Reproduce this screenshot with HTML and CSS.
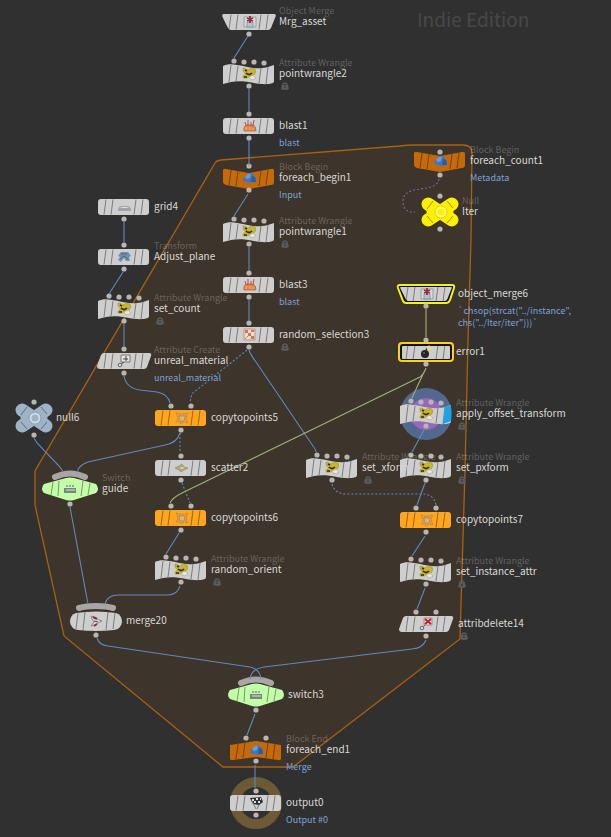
FILE: index.html
```html
<!DOCTYPE html>
<html lang="en">
<head>
<meta charset="utf-8">
<title>Network editor</title>
<link rel="stylesheet" href="styles.css">
</head>
<body>
<svg class="defs" aria-hidden="true">
  <defs>
    <!-- node bodies, centred on 0,0 -->
    <g id="s-rect"><rect x="-26" y="-8" width="51" height="16" rx="3" fill="currentColor"/><use href="#ticks"/></g>
    <g id="ticks" class="ticks"><path d="M-18-7.5-20 7.5M-11-7.5-13 7.5M12-7.5 10 7.5M19-7.5 17 7.5"/></g>
    <g id="s-wave"><path fill="currentColor" d="M-26-8C-22-10-17-10-12-9C-4-8 4-5 12-6C17-6 21-8 25-9V7Q25 8 24 9C18 11 11 10 5 9C-4 7-12 7-18 8Q-22 9-26 10Z"/><path class="ticks" d="M-18-9-20 8M-11-8-13 7M12-6 10 9M19-7 17 10"/></g>
    <g id="s-down"><path fill="currentColor" d="M-26-8Q-25-10-23-9L0-5 22-9Q25-10 25-7V4Q25 7 22 7L0 11-23 7Q-26 6-26 4Z"/><path class="ticks" d="M-18-8-20 7M-11-7-13 8M12-7 10 8M19-8 17 7"/></g>
    <g id="s-up"><path fill="currentColor" d="M-26-5 0-9 25-5V8Q25 11 22 10L0 7-23 10Q-26 11-26 8Z"/><path class="ticks" d="M-18-6-20 9M-11-7-13 8M12-7 10 8M19-6 17 9"/></g>
    <g id="s-trap"><path fill="currentColor" d="M-25-8H25Q28-8 26-4L22 6Q21 8 19 8H-18Q-20 8-21 6L-26-4Q-28-8-25-8Z"/><use href="#ticks"/></g>
    <g id="s-para"><path fill="currentColor" d="M-20-8H25Q28-8 27-5L23 6Q22 8 20 8H-24Q-27 8-27 5L-23-6Q-22-8-20-8Z"/><use href="#ticks"/></g>
    <g id="s-hex"><path fill="currentColor" d="M-26-5-4-11Q0-12 4-11L26-5Q30 0 26 4L4 11Q0 12-4 11L-26 4Q-30 0-26-5Z"/><path class="ticks" d="M-17-7-19 6M-11-8-12 7M13-8 11 7M20-6 18 6"/><path class="arc" d="M-15-12Q0-19 15-12"/></g>
    <g id="s-merge"><path fill="currentColor" d="M-20-8Q0-11 20-8Q26-6 26 1Q25 8 18 9Q0 11-18 9Q-25 8-26 1Q-26-6-20-8Z"/><path class="ticks" d="M-18-8-20 8M-11-9-13 9M12-9 10 9M19-8 17 8"/><path class="arc" d="M-17-13Q-10-15 0-15T17-13"/></g>
    <g id="s-null"><path d="M-12-8 12 8M-12 8 12-8" fill="none" stroke="currentColor" stroke-width="13" stroke-linecap="round"/><path d="M-14 0-8-5H8L14 0 8 5H-8Z" fill="currentColor"/><path class="ticks" d="M-13-3-7-11M7-11 13-4M-13 4-7 11M7 11 13 4"/><circle r="4.5" cx="1" fill="none" stroke="#fff" stroke-opacity=".5" stroke-width="2"/><circle r="6" cx="1" fill="none" stroke="#000" stroke-opacity=".22" stroke-dasharray="1 1"/></g>
    <!-- connectors -->
    <circle id="p-in" class="port" cy="-12" r="2.6"/>
    <circle id="p-out" class="port" cy="12" r="2.6"/>
    <g id="p-in2" class="port"><circle cx="-10" cy="-12" r="2.6"/><circle cx="10" cy="-12" r="2.6"/></g>
    <g id="p-in4" class="port"><circle cx="-15" cy="-13" r="2.6"/><circle cx="-5" cy="-12" r="2.6"/><circle cx="5" cy="-12" r="2.6"/><circle cx="15" cy="-11" r="2.6"/></g>
    <!-- icons -->
    <g id="i-merge-obj"><path d="M-5-5H7V5H-5Z" fill="#d3dcdf" stroke="#8fa0a6"/><path d="M-2 5V0H4V5Z" fill="#b3c5cb" stroke="#7b929a" stroke-width=".8"/><path d="M1-6V1M-2-4 4-1M4-4-2-1" stroke="#a52634" stroke-width="1.8"/></g>
    <g id="i-wrangle"><path d="M-6-6Q-3-6-1-4Q2-7 6-5Q8-2 5 1L1 2Q-1 5-6 4L-6 2Q-4 0-3 0Q-7-2-6-6Z" fill="#c9b62a" stroke="#a1952f" stroke-width=".6"/><path d="M-3-1Q0 2 3-1M-5 3-2 3M-4-4-2-3" stroke="#2f2d19" stroke-width="1.7" fill="none"/><path d="M0 3 4 1 7 4 4 6 1 5Z" fill="#e6e5dc" stroke="#99978a" stroke-width=".5"/></g>
    <g id="i-blast"><path d="M-5 5Q-6 0-2-1H4Q7 0 7 5Z" fill="#df8747" stroke="#a9603a" stroke-width=".7"/><path d="M-4-4-3 0M-1-6V0M2-4V0M5-6 4 0" stroke="#b5504c" fill="none"/><path d="M-3 4V1M1 4V1M4 4V2" stroke="#f3b67e" fill="none"/></g>
    <g id="i-block"><path d="M-6 3Q-6-1-3-2-1-6 2-5Q5-4 6-1 8 1 7 4Q1 6-6 3Z" fill="#3f76bd"/><path d="M-4-1Q-1-6 2-4L1 0-2 1Z" fill="#6a9cd8"/><path d="M2 4 3-2 6-1 7 4Z" fill="#2b5c9f"/></g>
    <g id="i-random"><path d="M-5-6H6V5H-5Z" fill="#ead9ce" stroke="#bd8468" stroke-width=".8"/><path d="M-4-5H-1V-2H-4ZM-1-2H2V1H-1ZM2 1H5V4H2ZM2-5H5V-3H2Z" fill="#c67a54"/><path d="M-4 4-1 1" stroke="#b79080" fill="none"/></g>
    <g id="i-grid"><path d="M-6 4V2Q-5-1-3-1H4Q6-1 7 2V4Z" fill="#a2a2a9"/><path d="M-4 1-2 0H3L5 1Z" fill="#dddde1"/></g>
    <g id="i-xform"><path d="M-6-1-3-5H4L7-1 5 0 6 4H2L0 1-3 5-6 3-4 0Z" fill="#7390b0"/><path d="M-3-3H3M-4 2 0-1 4 2" stroke="#48678a" fill="none"/></g>
    <g id="i-attr"><path d="M-3-6H6V1H-3Z" fill="#e6e6e6" stroke="#777"/><path d="M-1-2H4M2-5V0M-4 4 0 1" stroke="#444" fill="none"/><circle cx="-4" cy="4" r="1.8" fill="#ddd" stroke="#666"/></g>
    <g id="i-delete"><path d="M-2-6H6V1H-2Z" fill="#ddd" stroke="#996c70" stroke-width=".7"/><path d="M-1-5 5 0M5-5-1 0" stroke="#c3202d" stroke-width="2"/><path d="M-4 4-1 1" stroke="#555"/><circle cx="-4" cy="4" r="1.8" fill="#ddd" stroke="#666"/></g>
    <g id="i-copy"><path d="M-5-5-1-4 3-4 7-5 5 0 7 5 3 4 0 6-2 4-5 4-3 0Z" fill="#d99f4f" stroke="#b9823f" stroke-width=".8" stroke-dasharray="2 1"/><path d="M-2-2H4L3 3H-1Z" fill="#e0b673" stroke="#b9823f" stroke-width=".7"/></g>
    <g id="i-scatter"><path d="M-6 0-2-2 1-4 3-1 7 0 3 2 0 4-2 2Z" fill="#b0a873" stroke="#8b8768" stroke-width=".6"/><path d="M-2 0 1-1 4 0 1 1Z" fill="#dfdaa9"/></g>
    <g id="i-switch"><path d="M-6-1H6V4H-6Z" fill="#77867b"/><path d="M-4 0H5V2H-4Z" fill="#a9b7ae"/><path d="M-4-3H-2M-1-3H1M2-3H4" stroke="#7d927c" stroke-width="1.5"/></g>
    <g id="i-join"><path d="M-5-5 0-3 3-1 6 0 2 2-1 4-5 5-2 1-4-2Z" fill="#dbd4d6" stroke="#81757b" stroke-width=".8"/><path d="M-3-4 1-2M-2 5 1 3" stroke="#763445" stroke-width="2"/><path d="M-2 0 2 1" stroke="#50474c"/></g>
    <g id="i-bomb"><circle cx="-1" cy="2" r="4" fill="#252525"/><path d="M0-2 2-4" stroke="#333" stroke-width="2"/><circle cx="3" cy="-4" r="2.4" fill="#ead887"/><circle cx="-2" cy="1" r="1" fill="#666"/></g>
    <g id="i-flag"><path d="M-6-5 5-6 7-1 3 2-3 1Z" fill="#2f2f2f"/><path d="M-4-4H-2V-2H-4ZM0-5H2V-3H0ZM4-5H5V-3H4ZM-2-2H0V0H-2ZM2-2H4V0H2Z" fill="#ddd"/><path d="M-4-2 0 6M3 2 1 6" stroke="#777" fill="none"/></g>
    <g id="i-lock"><path d="M2 4V2Q4 0 6 2V4" fill="none" stroke="#5a5a5a" stroke-width="1.4"/><path d="M1 3H7L8 7Q4 9 0 7Z" fill="#595b5b"/><path d="M4 4V6" stroke="#333"/></g>
  </defs>
</svg>

<main class="canvas">
  <svg class="layer" aria-hidden="true"><path class="box" d="M221 160 400 146Q407 145 414 145H463Q472 145 472 153L471 240 468 340 465 470 460 639 293 767H223L64 636 35 505V471L215 163Q216 161 221 160Z"/></svg>
  <h1 class="edition">Indie Edition</h1>

  <article class="node" id="mrg-asset"><svg class="body"><use href="#s-trap"/><use href="#i-merge-obj"/><use href="#p-out"/></svg><div class="label"><span class="type">Object Merge</span><span class="name">Mrg_asset</span></div></article>
  <article class="node" id="pointwrangle2"><svg class="body"><use href="#s-wave"/><use href="#i-wrangle"/><use href="#p-in4"/><use href="#p-out"/></svg><div class="label"><span class="type">Attribute Wrangle</span><span class="name">pointwrangle2</span><svg class="lock"><use href="#i-lock"/></svg></div></article>
  <article class="node" id="blast1"><svg class="body"><use href="#s-rect"/><use href="#i-blast"/><use href="#p-in"/><use href="#p-out"/></svg><div class="label"><span class="name">blast1</span><span class="note">blast</span></div></article>
  <article class="node block" id="foreach-begin1"><svg class="body"><use href="#s-down"/><use href="#i-block"/><use href="#p-in"/><use href="#p-out"/></svg><div class="label"><span class="type">Block Begin</span><span class="name">foreach_begin1</span><span class="note">Input</span></div></article>
  <article class="node" id="pointwrangle1"><svg class="body"><use href="#s-wave"/><use href="#i-wrangle"/><use href="#p-in4"/><use href="#p-out"/></svg><div class="label"><span class="type">Attribute Wrangle</span><span class="name">pointwrangle1</span><svg class="lock"><use href="#i-lock"/></svg></div></article>
  <article class="node" id="blast3"><svg class="body"><use href="#s-rect"/><use href="#i-blast"/><use href="#p-in"/><use href="#p-out"/></svg><div class="label"><span class="name">blast3</span><span class="note">blast</span></div></article>
  <article class="node" id="random-selection3"><svg class="body"><use href="#s-rect"/><use href="#i-random"/><use href="#p-in"/><use href="#p-out"/></svg><div class="label"><span class="name">random_selection3</span><svg class="lock"><use href="#i-lock"/></svg></div></article>

  <article class="node" id="grid4"><svg class="body"><use href="#s-rect"/><use href="#i-grid"/><use href="#p-out"/></svg><div class="label"><span class="name">grid4</span></div></article>
  <article class="node" id="adjust-plane"><svg class="body"><use href="#s-rect"/><use href="#i-xform"/><use href="#p-in"/><use href="#p-out"/></svg><div class="label"><span class="type">Transform</span><span class="name">Adjust_plane</span></div></article>
  <article class="node" id="set-count"><svg class="body"><use href="#s-wave"/><use href="#i-wrangle"/><use href="#p-in4"/><use href="#p-out"/></svg><div class="label"><span class="type">Attribute Wrangle</span><span class="name">set_count</span><svg class="lock"><use href="#i-lock"/></svg></div></article>
  <article class="node" id="unreal-material"><svg class="body"><use href="#s-para"/><use href="#i-attr"/><use href="#p-in"/><use href="#p-out"/></svg><div class="label"><span class="type">Attribute Create</span><span class="name">unreal_material</span><span class="note">unreal_material</span></div></article>

  <article class="node null-blue" id="null6"><svg class="body"><use href="#s-null"/><circle class="port" cy="-16" r="2.6"/><circle class="port" cy="17" r="2.6"/></svg><div class="label near"><span class="name">null6</span></div></article>
  <article class="node switch" id="guide"><svg class="body"><use href="#s-hex"/><use href="#i-switch"/><circle class="port" cy="15" r="2.6"/></svg><div class="label wide"><span class="type">Switch</span><span class="name">guide</span></div></article>

  <article class="node copy" id="copytopoints5"><svg class="body"><use href="#s-rect"/><use href="#i-copy"/><use href="#p-in2"/><use href="#p-out"/></svg><div class="label"><span class="name">copytopoints5</span></div></article>
  <article class="node" id="scatter2"><svg class="body"><use href="#s-rect"/><use href="#i-scatter"/><use href="#p-in"/><use href="#p-out"/></svg><div class="label"><span class="name">scatter2</span></div></article>
  <article class="node copy" id="copytopoints6"><svg class="body"><use href="#s-rect"/><use href="#i-copy"/><use href="#p-in2"/><use href="#p-out"/></svg><div class="label"><span class="name">copytopoints6</span></div></article>
  <article class="node" id="random-orient"><svg class="body"><use href="#s-wave"/><use href="#i-wrangle"/><use href="#p-in4"/><use href="#p-out"/></svg><div class="label"><span class="type">Attribute Wrangle</span><span class="name">random_orient</span><svg class="lock"><use href="#i-lock"/></svg></div></article>
  <article class="node" id="merge20"><svg class="body"><use href="#s-merge"/><use href="#i-join"/><circle class="port" cy="14" r="2.6"/></svg><div class="label"><span class="name">merge20</span></div></article>

  <article class="node block" id="foreach-count1"><svg class="body"><use href="#s-down"/><use href="#i-block"/><circle class="port" cy="-9" r="2.6"/><circle class="port" cy="14" r="2.6"/></svg><div class="label"><span class="type">Block Begin</span><span class="name">foreach_count1</span><span class="note">Metadata</span></div></article>
  <article class="node null-yellow" id="iter"><svg class="body"><use href="#s-null"/><circle class="port" cy="-16" r="2.6"/><circle class="port" cy="17" r="2.6"/></svg><div class="label near"><span class="type">Null</span><span class="name">Iter</span></div></article>

  <article class="node" id="object-merge6"><svg class="body"><use href="#s-trap"/><path class="gap" d="M-25-8H25Q28-8 26-4L22 6Q21 8 19 8H-18Q-20 8-21 6L-26-4Q-28-8-25-8Z"/><path class="selected" d="M-26-9H26Q29-9 28-6L24 6Q23 9 20 9H-20Q-22 9-23 7L-28-6Q-29-9-26-9Z"/><use href="#i-merge-obj"/><use href="#p-out"/></svg><div class="label wide"><span class="name">object_merge6</span><span class="note">`chsop(strcat("../instance",<br>chs("../Iter/iter")))`</span></div></article>
  <article class="node" id="error1"><svg class="body"><use href="#s-rect"/><rect class="gap" x="-25" y="-7" width="50" height="15" rx="2"/><rect class="selected current" x="-27" y="-9" width="54" height="18" rx="3"/><use href="#i-bomb"/><use href="#p-in"/><use href="#p-out"/></svg><div class="label"><span class="name">error1</span></div></article>

  <article class="node" id="set-xform"><svg class="body"><use href="#s-wave"/><use href="#i-wrangle"/><use href="#p-in4"/><use href="#p-out"/></svg><div class="label"><span class="type">Attribute Wrangle</span><span class="name">set_xform</span><svg class="lock"><use href="#i-lock"/></svg></div></article>
  <article class="node" id="apply-offset"><svg class="body"><circle r="26" fill="#53688f"/><circle r="16" fill="#9568b8"/><use href="#s-wave"/><path fill="#12a7ec" d="M19-7 25-9V7L17 10Z"/><use href="#i-wrangle"/><use href="#p-in4"/><use href="#p-out"/></svg><div class="label"><span class="type">Attribute Wrangle</span><span class="name">apply_offset_transform</span><svg class="lock"><use href="#i-lock"/></svg></div></article>
  <article class="node" id="set-pxform"><svg class="body"><use href="#s-wave"/><use href="#i-wrangle"/><use href="#p-in4"/><use href="#p-out"/></svg><div class="label"><span class="type">Attribute Wrangle</span><span class="name">set_pxform</span><svg class="lock"><use href="#i-lock"/></svg></div></article>
  <article class="node copy" id="copytopoints7"><svg class="body"><use href="#s-rect"/><use href="#i-copy"/><use href="#p-in2"/><use href="#p-out"/></svg><div class="label"><span class="name">copytopoints7</span></div></article>
  <article class="node" id="set-instance-attr"><svg class="body"><use href="#s-wave"/><use href="#i-wrangle"/><use href="#p-in4"/><use href="#p-out"/></svg><div class="label"><span class="type">Attribute Wrangle</span><span class="name">set_instance_attr</span><svg class="lock"><use href="#i-lock"/></svg></div></article>
  <article class="node" id="attribdelete14"><svg class="body"><use href="#s-para"/><use href="#i-delete"/><use href="#p-in2"/><use href="#p-out"/></svg><div class="label wide"><span class="name">attribdelete14</span><svg class="lock"><use href="#i-lock"/></svg></div></article>

  <article class="node switch" id="switch3"><svg class="body"><use href="#s-hex"/><use href="#i-switch"/><circle class="port" cy="15" r="2.6"/></svg><div class="label wide"><span class="name">switch3</span></div></article>
  <article class="node block" id="foreach-end1"><svg class="body"><use href="#s-up"/><use href="#i-block"/><use href="#p-in2"/><circle class="port" cy="11" r="2.6"/></svg><div class="label"><span class="type">Block End</span><span class="name">foreach_end1</span><span class="note">Merge</span></div></article>
  <article class="node" id="output0"><svg class="body"><circle r="21" fill="none" stroke="#6d5936" stroke-width="10"/><use href="#s-rect"/><use href="#i-flag"/><use href="#p-in"/><use href="#p-out"/></svg><div class="label"><span class="name">output0</span><span class="note">Output #0</span></div></article>

  <svg class="layer" aria-hidden="true">
    <g class="wire">
      <path d="M248 36 234 58M249 89V112M249 140V166M248 194 234 216M249 247V271M249 299V321M124 222V243M123 272 109 294M124 324V347"/>
      <path d="M124 376Q126 388 140 390L157 392Q168 394 170 403M249 350Q250 354 256 362L313 446Q316 450 316 452"/>
      <path d="M180 433Q177 443 165 445L88 462Q79 465 77 472M34 438 37 443 60 467 63 472"/>
      <path d="M179 533 166 554M180 586Q177 595 168 595H119Q107 595 105 604M70 507 88 604"/>
      <path d="M97 638Q99 645 108 646L250 667Q260 669 261 679M426 640Q423 648 412 649L264 667Q251 669 250 679M255 714 247 735M255 765V788"/>
      <path d="M424 430 412 452M425 483 417 505M425 536 412 556M425 588 417 609"/>
    </g>
    <g class="wire dashed"><path d="M247 350 193 393Q191 395 190 403M180 433V453M182 483 190 503M332 484Q335 494 346 494H422Q434 494 436 505"/></g>
    <path class="wire green" d="M426 309V337M426 368Q424 374 420 377L182 493Q172 498 170 503M424 372 412 398"/>
    <path class="wire purple" d="M439 179Q438 186 427 188L414 190Q402 193 403 203T415 212"/>
  </svg>
</main>
</body>
</html>
```
FILE: styles.css
```css
body {
  margin: 0;
  background: #303030;
  font-family: "Noto Sans CJK SC", "Noto Sans", sans-serif;
}

.defs {
  position: absolute;
  width: 0;
  height: 0;
}

.canvas {
  position: relative;
  min-height: 100vh;
  overflow: hidden;
}

.layer {
  position: absolute;
  inset: 0;
  width: 100%;
  height: 100%;
  overflow: visible;
  pointer-events: none;
}

.box {
  fill: #3d342b;
  stroke: #a9620f;
  stroke-width: 1.3;
}

.edition {
  position: absolute;
  left: 417px;
  top: 7px;
  margin: 0;
  font-size: 19px;
  line-height: 24px;
  font-weight: 400;
  color: #484848;
}

.node {
  position: absolute;
  color: #cecece;
}

.body {
  position: absolute;
  width: 1px;
  height: 1px;
  overflow: visible;
}

.ticks {
  fill: none;
  stroke: #000;
  stroke-opacity: .4;
  stroke-width: 1;
}

.arc {
  fill: none;
  stroke: #aaa5a5;
  stroke-width: 6;
  stroke-linecap: round;
}

.port { fill: #b9b5b3; }

.block { color: #c56a08; }
.copy { color: #ffa51e; }
.switch { color: #c3ffa9; }
.null-blue { color: #9db4c7; }
.null-yellow { color: #fff000; }

.selected {
  fill: none;
  stroke: #f1f31d;
  stroke-width: 2;
}

.selected.current { stroke: #ffd119; }

.gap {
  fill: none;
  stroke: #111;
  stroke-width: 2;
}

.label {
  position: absolute;
  z-index: 1;
  left: 30px;
  top: -17px;
  display: grid;
  grid-template-rows: 10px 11px auto;
  white-space: nowrap;
}

.label.near { left: 22px; }
.label.wide { left: 32px; }

.type {
  grid-row: 1;
  font-size: 9px;
  line-height: 12px;
  color: rgba(255, 255, 255, .24);
}

.name {
  grid-row: 2;
  font-size: 10px;
  line-height: 11px;
  color: #dad8d5;
}

.note {
  grid-row: 3;
  margin-top: 7px;
  font-size: 9px;
  line-height: 12px;
  color: #7ba3d6;
}

.lock {
  grid-row: 3;
  width: 8px;
  height: 9px;
  margin: 4px 0 0 2px;
}

.wire {
  fill: none;
  stroke: #6089bd;
  stroke-width: 1.1;
}

.dashed { stroke-dasharray: 2 2; }
.green { stroke: #9db476; }
.purple { stroke: #8268a6; stroke-dasharray: 2 2; }

/* node positions on the network canvas */
#mrg-asset { left: 249px; top: 22px; }
#pointwrangle2 { left: 249px; top: 74px; }
#blast1 { left: 249px; top: 126px; }
#foreach-begin1 { left: 249px; top: 178px; }
#pointwrangle1 { left: 249px; top: 232px; }
#blast3 { left: 249px; top: 285px; }
#random-selection3 { left: 249px; top: 335px; }
#grid4 { left: 124px; top: 207px; }
#adjust-plane { left: 124px; top: 257px; }
#set-count { left: 124px; top: 309px; }
#unreal-material { left: 124px; top: 361px; }
#null6 { left: 34px; top: 418px; }
#guide { left: 70px; top: 489px; }
#copytopoints5 { left: 181px; top: 418px; }
#scatter2 { left: 181px; top: 468px; }
#copytopoints6 { left: 181px; top: 518px; }
#random-orient { left: 181px; top: 570px; }
#merge20 { left: 96px; top: 621px; }
#foreach-count1 { left: 440px; top: 161px; }
#iter { left: 440px; top: 212px; }
#object-merge6 { left: 426px; top: 294px; }
#error1 { left: 426px; top: 352px; }
#set-xform { left: 332px; top: 468px; }
#apply-offset { left: 426px; top: 414px; }
#set-pxform { left: 426px; top: 468px; }
#copytopoints7 { left: 426px; top: 520px; }
#set-instance-attr { left: 426px; top: 572px; }
#attribdelete14 { left: 426px; top: 624px; }
#switch3 { left: 256px; top: 695px; }
#foreach-end1 { left: 256px; top: 750px; }
#output0 { left: 256px; top: 803px; }
```
